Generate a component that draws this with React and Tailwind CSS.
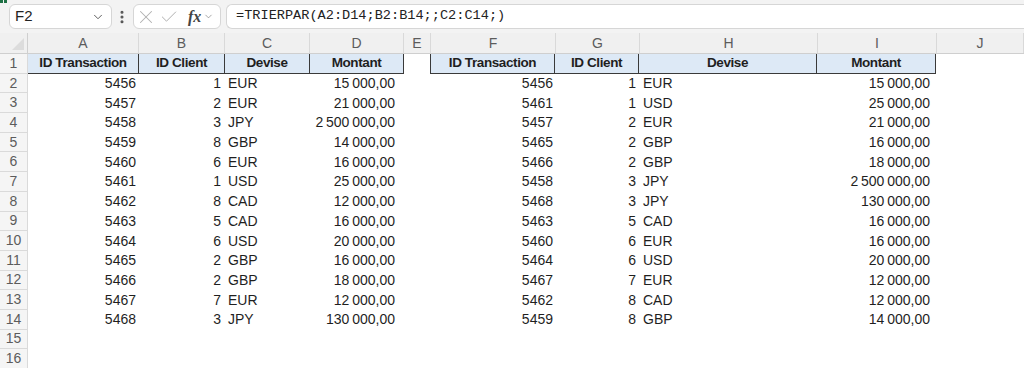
import React from 'react';
import { ChevronDown, EllipsisVertical, X, Check } from 'lucide-react';

const NS = '\u202f';

const gauche = [
  ['5456', '1', 'EUR', `15${NS}000,00`],
  ['5457', '2', 'EUR', `21${NS}000,00`],
  ['5458', '3', 'JPY', `2${NS}500${NS}000,00`],
  ['5459', '8', 'GBP', `14${NS}000,00`],
  ['5460', '6', 'EUR', `16${NS}000,00`],
  ['5461', '1', 'USD', `25${NS}000,00`],
  ['5462', '8', 'CAD', `12${NS}000,00`],
  ['5463', '5', 'CAD', `16${NS}000,00`],
  ['5464', '6', 'USD', `20${NS}000,00`],
  ['5465', '2', 'GBP', `16${NS}000,00`],
  ['5466', '2', 'GBP', `18${NS}000,00`],
  ['5467', '7', 'EUR', `12${NS}000,00`],
  ['5468', '3', 'JPY', `130${NS}000,00`],
];

const droite = [
  ['5456', '1', 'EUR', `15${NS}000,00`],
  ['5461', '1', 'USD', `25${NS}000,00`],
  ['5457', '2', 'EUR', `21${NS}000,00`],
  ['5465', '2', 'GBP', `16${NS}000,00`],
  ['5466', '2', 'GBP', `18${NS}000,00`],
  ['5458', '3', 'JPY', `2${NS}500${NS}000,00`],
  ['5468', '3', 'JPY', `130${NS}000,00`],
  ['5463', '5', 'CAD', `16${NS}000,00`],
  ['5460', '6', 'EUR', `16${NS}000,00`],
  ['5464', '6', 'USD', `20${NS}000,00`],
  ['5467', '7', 'EUR', `12${NS}000,00`],
  ['5462', '8', 'CAD', `12${NS}000,00`],
  ['5459', '8', 'GBP', `14${NS}000,00`],
];

const colonnes = [
  { lettre: 'A', w: 'w-[111px]' },
  { lettre: 'B', w: 'w-[86px]' },
  { lettre: 'C', w: 'w-[85px]' },
  { lettre: 'D', w: 'w-[94px]' },
  { lettre: 'E', w: 'w-[27px]' },
  { lettre: 'F', w: 'w-[125px]' },
  { lettre: 'G', w: 'w-[84px]' },
  { lettre: 'H', w: 'w-[178px]' },
  { lettre: 'I', w: 'w-[119px]' },
  { lettre: 'J', w: 'flex-1' },
];

const entetes = ['ID Transaction', 'ID Client', 'Devise', 'Montant'];

const sans = { fontFamily: '"Liberation Sans", Arial, sans-serif' };

function NumLigne({ n }) {
  return (
    <div
      className="w-[28px] shrink-0 h-full flex items-center justify-center bg-[#f5f5f5] border-r border-b border-[#dadada] text-[#5c5c5c]"
      style={sans}
    >
      {n}
    </div>
  );
}

// bloc de gauche (A:D) et de droite (F:I), mêmes colonnes, largeurs différentes
function Cellules({ ligne, largeurs, prMontant }) {
  if (!ligne) {
    return largeurs.map((w, i) => <div key={i} className={`${w} shrink-0`} />);
  }
  return (
    <>
      <div className={`${largeurs[0]} shrink-0 text-right pr-[3px]`}>{ligne[0]}</div>
      <div className={`${largeurs[1]} shrink-0 text-right pr-[4px]`}>{ligne[1]}</div>
      <div className={`${largeurs[2]} shrink-0 pl-[3px]`}>{ligne[2]}</div>
      <div className={`${largeurs[3]} shrink-0 text-right ${prMontant}`}>{ligne[3]}</div>
    </>
  );
}

function EnteteTable({ largeurs, bordGauche }) {
  return (
    <>
      {entetes.map((t, i) => (
        <div
          key={t}
          className={`${largeurs[i]} shrink-0 h-full flex items-center justify-center bg-[#dde9f6] font-bold text-[13.5px] tracking-[-0.4px] border-b border-r border-[#3a3a3a] ${
            i === 0 && bordGauche ? 'border-l' : ''
          }`}
        >
          {t}
        </div>
      ))}
    </>
  );
}

const largeursG = ['w-[111px]', 'w-[86px]', 'w-[85px]', 'w-[94px]'];
const largeursD = ['w-[125px]', 'w-[84px]', 'w-[178px]', 'w-[119px]'];

export default function App() {
  return (
    <div className="w-[1024px] h-[368px] overflow-hidden bg-white text-[14px] text-[#1f1f1f]" style={sans}>
      {/* barre de formule */}
      <div className="relative h-[33px] bg-[#f3f3f3] flex items-center">
        <div className="absolute left-0 top-0 flex gap-[1px]">
          <div className="w-[3px] h-[3px] bg-[#1e7145]" />
          <div className="w-[3px] h-[3px] bg-[#1e7145]" />
        </div>
        <div className="ml-[9px] w-[103px] h-[25px] bg-white border border-[#d6d6d6] rounded-[6px] flex items-center justify-between pl-[5px] pr-[6px]">
          <span className="text-[15px] text-[#222]">F2</span>
          <ChevronDown size={14} strokeWidth={1.6} className="text-[#555]" />
        </div>
        <EllipsisVertical size={16} strokeWidth={2.6} className="ml-[2px] text-[#555]" />
        <div className="ml-[3px] w-[88px] h-[25px] bg-white border border-[#d6d6d6] rounded-[6px] flex items-center pl-[1px]">
          <X size={22} strokeWidth={1.1} className="text-[#b0b0b0]" />
          <Check size={20} strokeWidth={1.2} className="ml-[2px] text-[#b0b0b0]" />
          <span
            className="ml-[9px] text-[16px] italic font-bold text-[#444]"
            style={{ fontFamily: '"Liberation Serif", "Times New Roman", serif' }}
          >
            fx
          </span>
          <ChevronDown size={11} strokeWidth={1.4} className="ml-[2px] text-[#777]" />
        </div>
        <div className="ml-[5px] flex-1 h-[25px] bg-white border border-r-0 border-[#d6d6d6] rounded-l-[6px] flex items-center pl-[9px]">
          <span
            className="text-[13.6px] text-[#222]"
            style={{ fontFamily: '"Liberation Mono", "DejaVu Sans Mono", monospace' }}
          >
            =TRIERPAR(A2:D14;B2:B14;;C2:C14;)
          </span>
        </div>
      </div>

      {/* lettres de colonnes */}
      <div className="flex h-[21px] bg-[#f0f0f0] border-b border-[#cfcfcf] text-[#5c5c5c]">
        <div className="w-[28px] shrink-0 border-r border-[#cfcfcf] relative overflow-hidden">
          <div className="absolute right-[3px] bottom-[3px] w-0 h-0 border-l-[12px] border-l-transparent border-b-[12px] border-b-[#dcdcdc]" />
        </div>
        {colonnes.map((c) => (
          <div key={c.lettre} className={`${c.w} shrink-0 flex items-center justify-center border-r border-[#d9d9d9]`}>
            {c.lettre}
          </div>
        ))}
      </div>

      {/* ligne 1 : en-têtes des deux tableaux */}
      <div className="flex h-[19.7px]">
        <NumLigne n={1} />
        <EnteteTable largeurs={largeursG} />
        <div className="w-[26px] shrink-0" />
        <EnteteTable largeurs={largeursD} bordGauche />
      </div>

      {/* lignes 2 à 16 */}
      {Array.from({ length: 15 }).map((_, i) => (
        <div key={i} className="flex h-[19.7px] items-center">
          <NumLigne n={i + 2} />
          <Cellules ligne={gauche[i]} largeurs={largeursG} prMontant="pr-[9px]" />
          <div className="w-[27px] shrink-0" />
          <Cellules ligne={droite[i]} largeurs={largeursD} prMontant="pr-[7px]" />
        </div>
      ))}
    </div>
  );
}
